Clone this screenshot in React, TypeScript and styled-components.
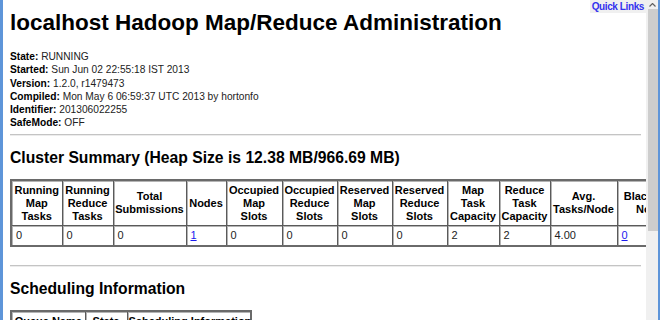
import React from "react";
import styled, { createGlobalStyle } from "styled-components";

const GlobalStyle = createGlobalStyle`
  html, body {
    margin: 0;
    padding: 0;
    overflow: hidden;
    background: #ffffff;
  }
  body {
    font-family: "Liberation Sans", Arial, sans-serif;
    color: #000;
  }
`;

type Column = { title: string[]; value: string; width: number; link?: boolean };

const summaryColumns: Column[] = [
  { title: ["Running", "Map", "Tasks"], value: "0", width: 51 },
  { title: ["Running", "Reduce", "Tasks"], value: "0", width: 51 },
  { title: ["Total", "Submissions"], value: "0", width: 73 },
  { title: ["Nodes"], value: "1", width: 40, link: true },
  { title: ["Occupied", "Map", "Slots"], value: "0", width: 56 },
  { title: ["Occupied", "Reduce", "Slots"], value: "0", width: 55 },
  { title: ["Reserved", "Map", "Slots"], value: "0", width: 55 },
  { title: ["Reserved", "Reduce", "Slots"], value: "0", width: 55 },
  { title: ["Map", "Task", "Capacity"], value: "2", width: 52 },
  { title: ["Reduce", "Task", "Capacity"], value: "2", width: 51 },
  { title: ["Avg.", "Tasks/Node"], value: "4.00", width: 67 },
  { title: ["Blacklisted", "Nodes"], value: "0", width: 72, link: true },
];

const schedulingColumns = [
  { title: "Queue Name", width: 74 },
  { title: "State", width: 42 },
  { title: "Scheduling Information", width: 124 },
];

const info: [string, string][] = [
  ["State:", "RUNNING"],
  ["Started:", "Sun Jun 02 22:55:18 IST 2013"],
  ["Version:", "1.2.0, r1479473"],
  ["Compiled:", "Mon May 6 06:59:37 UTC 2013 by hortonfo"],
  ["Identifier:", "201306022255"],
  ["SafeMode:", "OFF"],
];

const sum = (ws: { width: number }[]) => ws.reduce((a, c) => a + c.width, 0);

const App: React.FC = () => {
  return (
    <Frame>
      <GlobalStyle />
      <Edge />
      <Page>
        <QuickLinks href="#">Quick Links</QuickLinks>
        <Title>localhost Hadoop Map/Reduce Administration</Title>
        <InfoList>
          {info.map(([label, value]) => (
            <InfoLine key={label}>
              <b>{label}</b> {value}
            </InfoLine>
          ))}
        </InfoList>
        <Rule $gap={4} />
        <Heading>Cluster Summary (Heap Size is 12.38 MB/966.69 MB)</Heading>
        <DataTable style={{ width: sum(summaryColumns) }}>
          <colgroup>
            {summaryColumns.map((c, i) => (
              <col key={i} style={{ width: c.width }} />
            ))}
          </colgroup>
          <thead>
            <tr>
              {summaryColumns.map((c, i) => (
                <HeadCell key={i}>
                  {c.title.map((t, j) => (
                    <React.Fragment key={j}>
                      {j > 0 && <br />}
                      {t}
                    </React.Fragment>
                  ))}
                </HeadCell>
              ))}
            </tr>
          </thead>
          <tbody>
            <tr>
              {summaryColumns.map((c, i) => (
                <Cell key={i}>{c.link ? <CellLink href="#">{c.value}</CellLink> : c.value}</Cell>
              ))}
            </tr>
          </tbody>
        </DataTable>
        <Rule $gap={18} />
        <Heading>Scheduling Information</Heading>
        <DataTable style={{ width: sum(schedulingColumns) }}>
          <colgroup>
            {schedulingColumns.map((c, i) => (
              <col key={i} style={{ width: c.width }} />
            ))}
          </colgroup>
          <thead>
            <tr>
              {schedulingColumns.map((c) => (
                <HeadCell key={c.title}>{c.title}</HeadCell>
              ))}
            </tr>
          </thead>
        </DataTable>
      </Page>
      <Scrollbar>
        <ArrowButton>
          <svg width="7" height="4" viewBox="0 0 7 4">
            <path d="M0.5 3.5 L3.5 0.5 L6.5 3.5" fill="none" stroke="#606060" strokeWidth="1.2" />
          </svg>
        </ArrowButton>
        <Thumb />
      </Scrollbar>
      <Edge $narrow />
    </Frame>
  );
};

const Frame = styled.div`
  display: flex;
  width: 660px;
  height: 320px;
  overflow: hidden;
`;

const Edge = styled.div<{ $narrow?: boolean }>`
  flex: 0 0 ${(p) => (p.$narrow ? 2 : 3)}px;
  background: #5e95d9;
`;

const Page = styled.div`
  position: relative;
  flex: 1 1 auto;
  min-width: 0;
  overflow: hidden;
  padding: 0 5px 0 7px;
  background: #ffffff;
`;

const QuickLinks = styled.a`
  position: absolute;
  top: 0;
  right: 0;
  padding: 1px 2px 1px 2px;
  background: #f0f0f0;
  color: #3333ee;
  font-size: 10px;
  letter-spacing: -0.4px;
  font-weight: bold;
  line-height: 11px;
  text-decoration: none;
`;

const Title = styled.h1`
  margin: 10px 0 0;
  font-size: 22.5px;
  line-height: 26px;
  font-weight: bold;
  white-space: nowrap;
`;

const InfoList = styled.div`
  margin-top: 14px;
  font-size: 10.2px;
  line-height: 13.3px;
  color: #222;
`;

const InfoLine = styled.div`
  white-space: nowrap;
  b {
    color: #000;
  }
`;

const Rule = styled.hr<{ $gap?: number }>`
  margin: ${(p) => p.$gap ?? 5}px 0 0;
  border: 0;
  border-top: 1px solid #c4c4c4;
  border-bottom: 1px solid #ececec;
  height: 0;
`;

const Heading = styled.h2`
  margin: 12px 0 0;
  font-size: 15.7px;
  line-height: 20px;
  font-weight: bold;
  white-space: nowrap;
`;

const DataTable = styled.table`
  margin-top: 11px;
  border-collapse: collapse;
  table-layout: fixed;
  font-size: 11px;
  line-height: 13px;
  border: 2px solid #6a6a6a;
`;

const HeadCell = styled.th`
  border: 1px solid #5a5a5a;
  box-shadow: inset 1px 1px 0 #b4b4b4;
  padding: 3px 1px 2px;
  font-weight: bold;
  text-align: center;
  vertical-align: middle;
  white-space: nowrap;
`;

const Cell = styled.td`
  border: 1px solid #5a5a5a;
  box-shadow: inset 1px 1px 0 #b4b4b4;
  padding: 3px 3px 3px 4px;
  color: #222;
  white-space: nowrap;
`;

const CellLink = styled.a`
  color: #1a1aee;
  text-decoration: underline;
`;

const Scrollbar = styled.div`
  display: flex;
  flex-direction: column;
  flex: 0 0 12px;
  background: #f0f0f0;
`;

const ArrowButton = styled.div`
  display: flex;
  align-items: center;
  justify-content: center;
  height: 9px;
`;

const Thumb = styled.div`
  height: 222px;
  margin: 0 0 0 2px;
  background: #cdcdcd;
`;

export default App;
